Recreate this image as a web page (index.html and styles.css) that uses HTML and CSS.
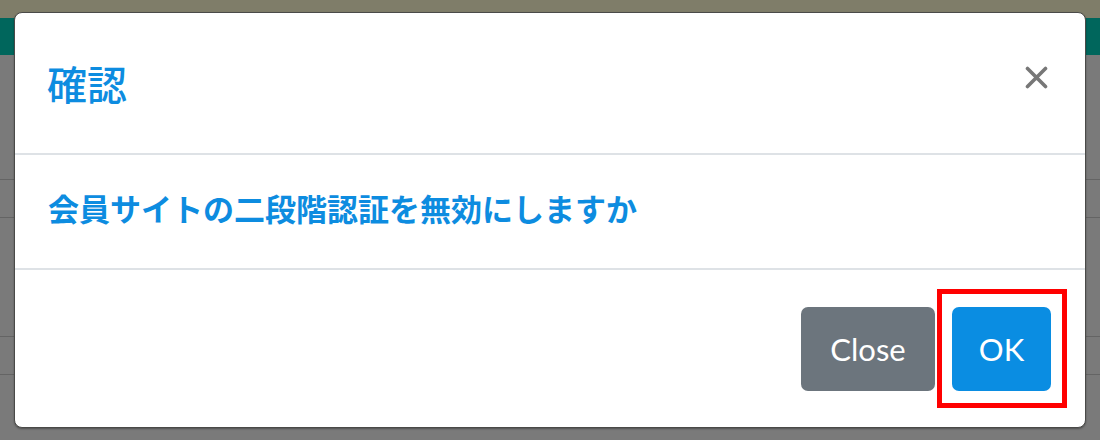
FILE: index.html
```html
<!DOCTYPE html>
<html lang="ja">
<head>
<meta charset="utf-8">
<title>確認</title>
<link rel="stylesheet" href="styles.css">
</head>
<body>
<div class="page">
  <div class="topbar"></div>
  <div class="navbar"></div>
  <div class="content">
    <div class="row r1"></div>
    <div class="row r2"></div>
    <div class="row r3"></div>
    <div class="row r4"></div>
  </div>
</div>

<div class="modal">
  <div class="modal-header">
    <h5 class="modal-title">確認</h5>
    <button class="btn-x" aria-label="Close">
      <svg width="23" height="23" viewBox="0 0 23 23"><path d="M2.5 2.5 L20.5 20.5 M20.5 2.5 L2.5 20.5" stroke="#777" stroke-width="3.6" stroke-linecap="round" fill="none"/></svg>
    </button>
  </div>
  <div class="modal-body">
    <p class="message">会員サイトの二段階認証を無効にしますか</p>
  </div>
  <div class="modal-footer">
    <button class="btn btn-secondary">Close</button>
    <div class="highlight-wrap">
      <button class="btn btn-primary">OK</button>
      <span class="highlight"></span>
    </div>
  </div>
</div>
</body>
</html>
```

FILE: styles.css
```css
html, body {
  margin: 0;
  padding: 0;
}
body {
  width: 1100px;
  height: 440px;
  overflow: hidden;
  background: #7a7a7a;
  font-family: "Noto Sans CJK JP", "Noto Sans", sans-serif;
  position: relative;
}
.page {
  display: flex;
  flex-direction: column;
}
.topbar {
  height: 18px;
  background: #7f7d69;
}
.navbar {
  height: 37px;
  background: #00665c;
}
.content {
  display: flex;
  flex-direction: column;
}
.row {
  border-bottom: 1px solid #646464;
}
.r1 { height: 124px; }
.r2 { height: 37px; }
.r3 { height: 118px; }
.r4 { height: 37px; }

.modal {
  position: absolute;
  left: 14px;
  top: 12px;
  width: 1070px;
  height: 414px;
  background: #fff;
  border: 1px solid #4a4a48;
  border-radius: 8px;
  box-shadow: 0 1px 2px rgba(0,0,0,0.35);
  display: flex;
  flex-direction: column;
  overflow: hidden;
}
.modal-header {
  height: 142px;
  flex: none;
  box-sizing: border-box;
  padding: 0 37px 0 32px;
  display: flex;
  align-items: center;
  justify-content: space-between;
  border-bottom: 2px solid #dee2e6;
}
.modal-title {
  margin: 0;
  font-size: 40px;
  line-height: 1;
  font-weight: 500;
  color: #0d8ce0;
}
.btn-x {
  border: 0;
  background: none;
  padding: 0;
  width: 23px;
  height: 23px;
  margin-top: -12px;
  cursor: pointer;
  display: block;
}
.btn-x svg { display: block; }

.modal-body {
  height: 115px;
  flex: none;
  box-sizing: border-box;
  padding: 0 32px 8px 33px;
  display: flex;
  align-items: center;
  border-bottom: 2px solid #dee2e6;
}
.message {
  margin: 0;
  font-size: 31px;
  line-height: 1;
  font-weight: 700;
  color: #0d8ce0;
}

.modal-footer {
  flex: 1;
  display: flex;
  align-items: center;
  justify-content: flex-end;
  gap: 17px;
  padding: 0 34px 0 0;
}
.btn {
  height: 84px;
  border: 0;
  border-radius: 7px;
  color: #fff;
  font-family: Lato, "Open Sans", sans-serif;
  font-size: 31px;
  padding: 0;
  cursor: pointer;
}
.btn-secondary {
  width: 134px;
  background: #6c757d;
}
.btn-primary {
  width: 99px;
  background: #0a8de2;
}
.highlight-wrap {
  position: relative;
  display: flex;
}
.highlight {
  position: absolute;
  left: -15px;
  top: -18px;
  right: -16px;
  bottom: -17px;
  border: 5px solid #f00;
  pointer-events: none;
}
```
